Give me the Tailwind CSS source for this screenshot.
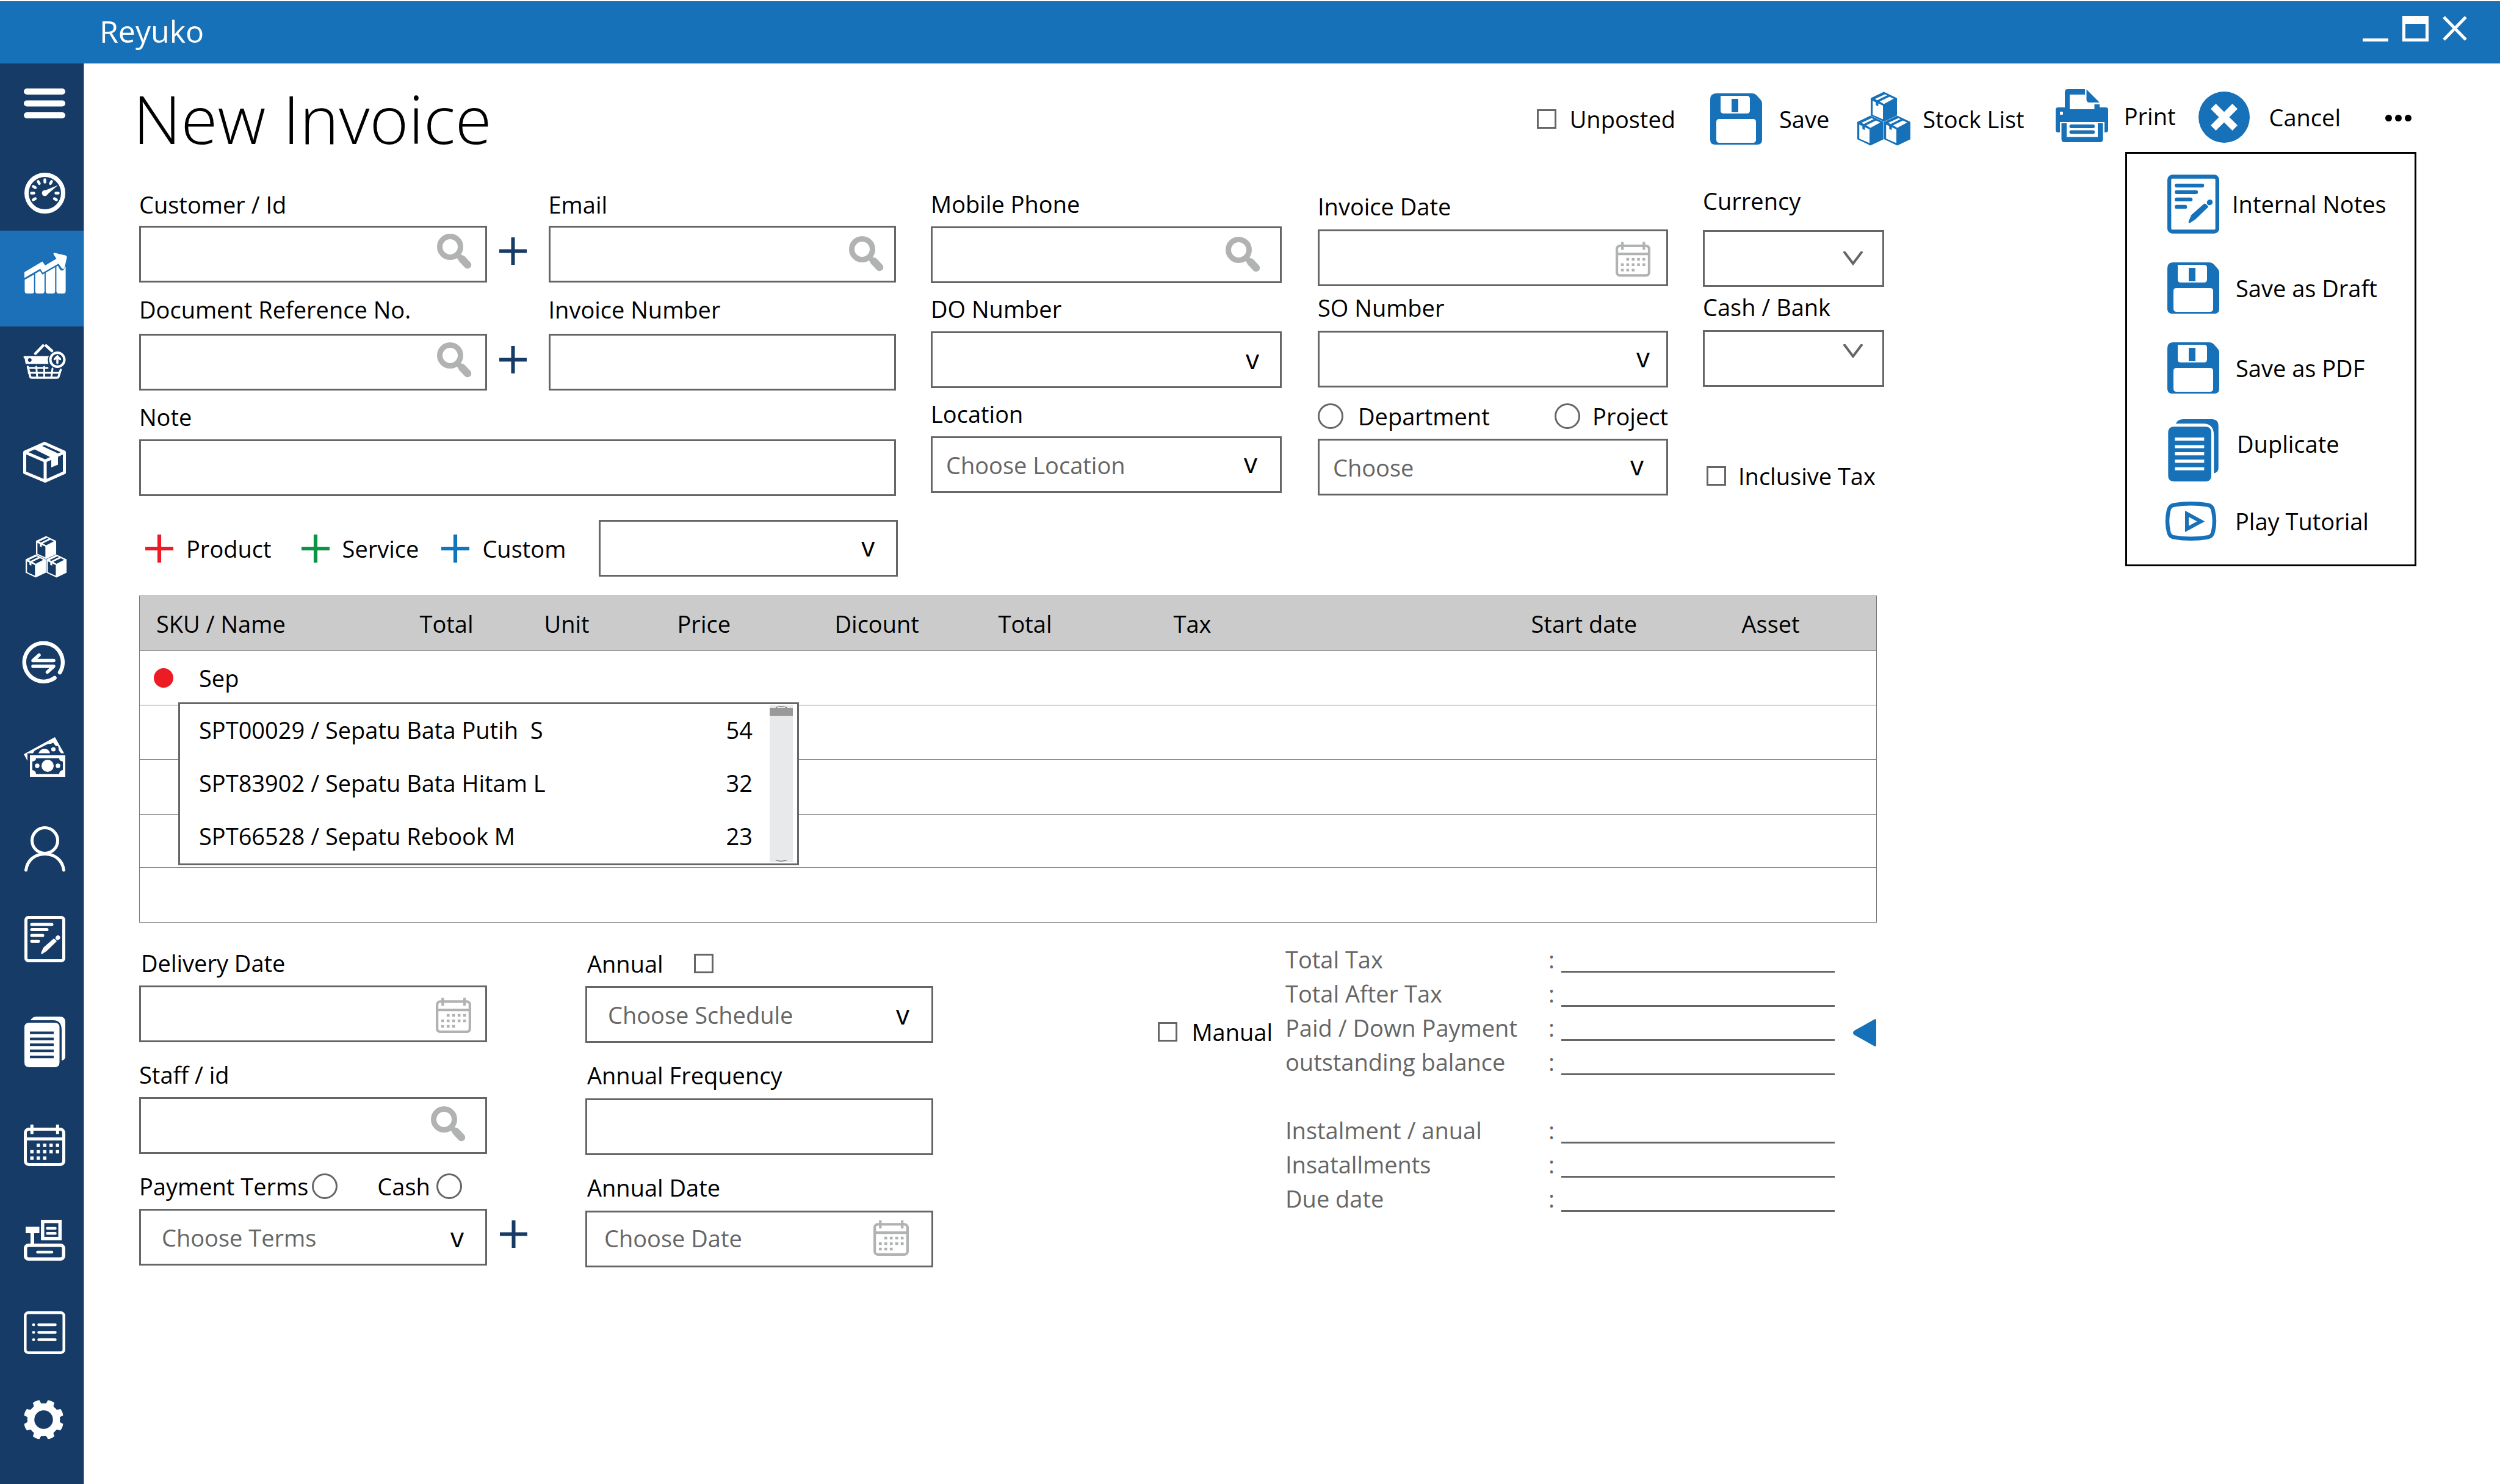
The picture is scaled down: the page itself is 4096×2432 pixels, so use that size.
<!DOCTYPE html>
<html lang="en">
<head>
<meta charset="utf-8">
<title>Reyuko - New Invoice</title>
<script src="https://cdn.jsdelivr.net/npm/@tailwindcss/browser@4"></script>
</head>
<body class="flex min-h-screen flex-col bg-white font-['Open_Sans','Noto_Sans',sans-serif] text-[38px] leading-[52px] text-black">

<!-- icon sprite -->
<svg class="hidden" aria-hidden="true">
  <symbol id="i-menu" viewBox="0 0 68 49"><g stroke="currentColor" stroke-width="10" stroke-linecap="round"><path d="M5 5H63M5 24.500H63M5 44H63"/></g></symbol>
  <symbol id="i-gauge" viewBox="0 0 67 67"><circle cx="33.500" cy="33.500" r="30" fill="none" stroke="currentColor" stroke-width="7"/><g stroke="currentColor" stroke-width="4.500" stroke-linecap="round"><path id="tick" d="M33.500 15.500V11.500"/><use href="#tick" transform="rotate(30 33.500 33.500)"/><use href="#tick" transform="rotate(-30 33.500 33.500)"/><use href="#tick" transform="rotate(-60 33.500 33.500)"/><use href="#tick" transform="rotate(90 33.500 33.500)"/><use href="#tick" transform="rotate(-90 33.500 33.500)"/><use href="#tick" transform="rotate(120 33.500 33.500)"/><use href="#tick" transform="rotate(-120 33.500 33.500)"/></g><circle cx="33.500" cy="33.500" r="4.800" fill="currentColor"/><path fill="currentColor" d="M31.500 30L55 20.500L36.500 36.500Z"/></symbol>
  <symbol id="i-chart" viewBox="0 0 70 67"><g fill="currentColor"><path d="M0 32L29.500 14.500L34 21L52.500 10L48.500 4Q46 0 50 .5L67 4.500Q70 5.500 69.500 8L66 24Q64 30 60 24L56 18L30 33L26 26.500L0 41.500Z"/><path d="M.5 44.500L15.700 36V64Q15.700 67 12.500 67H4Q.5 67 .5 63Z"/><path d="M17.700 34.500L25.500 30L29.500 36L32.900 34V63Q32.900 67 29 67H21.500Q17.700 67 17.700 63Z"/><path d="M34.900 33L50.300 24V63Q50.300 67 47 67H38.500Q34.900 67 34.900 63Z"/><path d="M52.400 23L55 21.500Q58 29 61 29.500Q65 29.500 66.500 23.500L67.600 24V63Q67.600 67 64 67H56Q52.400 67 52.400 63Z"/></g></symbol>
  <symbol id="i-basket" viewBox="0 0 70 57"><g fill="none" stroke="currentColor" stroke-linecap="round"><path stroke-width="4.500" d="M20 15.500L32.500 2.500M37.500 2.500L47 11"/><circle cx="56" cy="25.500" r="11.500" stroke-width="4"/><path stroke-width="3.500" d="M56 31V20.500M51.500 24.500L56 20L60.500 24.500"/><path stroke-width="3.500" stroke-linejoin="round" d="M7.500 37L11.500 53Q12 55 14 55H55Q57.500 55 58 53L61.500 42"/><path stroke-width="3" d="M8 39H40M9 47H59M21.500 37L23 55M34.500 37V55M48 40L46 55"/></g><path fill="currentColor" fill-rule="evenodd" d="M1.500 19.500H42Q39 25 41.500 32.500H4L2.500 24Q-1 21.500 1.500 19.500ZM10.800 23A3 3 0 1 0 10.800 29A3 3 0 1 0 10.800 23Z"/></symbol>
  <symbol id="i-box" viewBox="0 0 70 67"><g fill="none" stroke="currentColor" stroke-width="5" stroke-linejoin="round"><path d="M35 2.500L67.500 17V50.500L36 64.500L2.500 50.500V17Z"/><path d="M2.500 17L36 31.500L67.500 17M36 31V64"/></g><path fill="currentColor" d="M16 11L28 5.500L57 19V37.500L46 42V26Z"/></symbol>
  <symbol id="i-crate" viewBox="0 0 44 50"><path fill="currentColor" fill-rule="evenodd" d="M22 0L44 10.500V39.500L22 50L0 39.500V10.500ZM3.300 15V38.500L20.500 46V23L12.700 19.300V24.200L8.500 22.300V17.300ZM7 12L11 14L27.500 5.700L24 4ZM15 16L22 20.300L38.500 11.500L31.500 8Z"/></symbol>
  <symbol id="i-crates" viewBox="0 0 87 89"><use href="#i-crate" x="22" y="0" width="43" height="50"/><use href="#i-crate" x="0" y="39" width="43" height="50"/><use href="#i-crate" x="44" y="39" width="43" height="50"/></symbol>
  <symbol id="i-exchange" viewBox="0 0 70 71"><g fill="none" stroke="currentColor" stroke-linecap="round" stroke-linejoin="round"><path stroke-width="6.500" d="M53.500 60A31.500 31.500 0 1 1 62 51"/><path stroke-width="5.500" d="M52 31.500H18L28 22.500M18 41H52L41.500 50.500"/></g></symbol>
  <symbol id="i-money" viewBox="0 0 68 65"><g fill="currentColor"><path fill-rule="evenodd" d="M10 29.500H68V65H10ZM20 34.500Q20 39 14 40V54Q20 55 20 60.500H58Q58 55 64 54V40Q58 39 58 34.500Z"/><circle cx="39" cy="47" r="10"/><circle cx="22" cy="47" r="3.700"/><circle cx="56" cy="47" r="3.700"/><path fill-rule="evenodd" d="M0 28L51 0L66 26.500H6V39ZM15 26.500L18 22L40 11Q44 12 48 9L51 13Q52 15 56 14.500L57 18Q56 21 61 26.500Z"/><path d="M24 26.500Q27 19 34 19Q41 19 43 26.500Z"/><circle cx="48.500" cy="20" r="3.600"/></g></symbol>
  <symbol id="i-user" viewBox="0 0 67 75"><g fill="none" stroke="currentColor" stroke-width="5" stroke-linecap="round"><circle cx="33.500" cy="23.500" r="21"/><path d="M2.500 72C4.500 56 17 45.500 33.500 45.500S62.500 56 64.500 72"/></g></symbol>
  <symbol id="i-note" viewBox="0 0 67 76"><g fill="none" stroke="currentColor" stroke-linecap="round"><rect x="2.500" y="2.500" width="62" height="71" rx="4" stroke-width="5"/><path stroke-width="5" d="M12 14H45M12 22.500H37M12 32H30M12 41.500H23"/><path stroke-width="7" d="M54.500 36L55 35.500"/></g><path fill="currentColor" d="M27.500 60L31 52L47.500 37.500Q50 37 53 41.500L36.500 57.500L29 62.500Q27 62.500 27.500 60Z"/></symbol>
  <symbol id="i-docs" viewBox="0 0 67 83"><g fill="currentColor"><path fill-rule="evenodd" d="M8 10H49.500Q57.500 10 57.500 18V75Q57.500 83 49.500 83H8Q0 83 0 75V18Q0 10 8 10ZM9 24.500V28.700H48V24.500ZM9 34.500V38.700H48V34.500ZM9 44V48.200H48V44ZM9 54V58.200H48V54ZM9 64V68.200H48V64Z"/><path d="M10 6Q13 0 20 0H58Q67 0 67 9V65Q67 71 61 72V22Q61 6 47 6Z"/></g></symbol>
  <symbol id="i-calendar" viewBox="0 0 68 68"><g fill="none" stroke="currentColor" stroke-width="5"><rect x="2.500" y="7.500" width="63" height="58" rx="6"/><path d="M2 23.500H66M13.300 0V15.500M55.300 0V15.500"/><path stroke-width="5.300" stroke-dasharray="5.500 5" d="M21 34H60M10.500 44.500H60M10.500 55H38"/></g></symbol>
  <symbol id="i-register" viewBox="0 0 68 67"><g fill="none" stroke="currentColor" stroke-width="5.500" stroke-linecap="round"><rect x="30.800" y="2.700" width="28.500" height="28"/><rect x="2.700" y="41.700" width="62.500" height="22.500" rx="5"/><path stroke-width="4.500" d="M38.500 14H51.500M38.500 22.300H51.500M22.500 53H46"/></g><path fill="currentColor" d="M3 11.500H25.500V22H17V40H11V22H3Z"/></symbol>
  <symbol id="i-list" viewBox="0 0 68 70"><g fill="none" stroke="currentColor" stroke-width="4.500" stroke-linecap="round"><rect x="2.300" y="2.300" width="63.400" height="65.400" rx="5"/><path d="M24.500 22H51.500M24.500 34.500H51.500M24.500 46.500H51.500M15.800 22H16.200M15.800 34.500H16.200M15.800 46.500H16.200"/></g></symbol>
  <symbol id="i-gear" viewBox="0 0 67 67"><circle cx="33.500" cy="33.500" r="21" fill="none" stroke="currentColor" stroke-width="11.500"/><g fill="currentColor"><path id="tooth" d="M23.500 12Q28.500 7 27.500 1.500Q33.500 -.5 39.500 1.500Q38.500 7 43.500 12Z" transform="rotate(22.500 33.500 33.500)"/><use href="#tooth" transform="rotate(45 33.500 33.500)"/><use href="#tooth" transform="rotate(90 33.500 33.500)"/><use href="#tooth" transform="rotate(135 33.500 33.500)"/><use href="#tooth" transform="rotate(180 33.500 33.500)"/><use href="#tooth" transform="rotate(225 33.500 33.500)"/><use href="#tooth" transform="rotate(270 33.500 33.500)"/><use href="#tooth" transform="rotate(315 33.500 33.500)"/></g></symbol>
  <symbol id="i-floppy" viewBox="0 0 85 84"><path fill="currentColor" fill-rule="evenodd" d="M10 0H69Q73 0 76 3L83 11Q85 13.500 85 17V76Q85 84 77 84H8Q0 84 0 76V10Q0 0 10 0ZM17 4V28Q17 33 22 33H60Q65 33 65 28V9Q65 4 60 4ZM35 9H46V31H35ZM15 42Q10 42 10 47V76Q10 81 15 81H70Q75 81 75 76V47Q75 42 70 42Z"/></symbol>
  <symbol id="i-printer" viewBox="0 0 86 87"><g fill="currentColor"><path fill-rule="evenodd" d="M20 0H48V9H23V33H63.500V25H72V30H82Q86 30 86 34V67Q86 71 82 71H80V54H7V71H4Q0 71 0 67V34Q0 30 4 30H15V5Q15 0 20 0ZM7 38Q7 37 8 37H11Q12 37 12 38V41Q12 42 11 42H8Q7 42 7 41Z"/><path d="M50.500 .5L72 22H55.500Q50.500 22 50.500 17Z"/><path d="M9.500 56H18V78.500H69V56H77.500V82Q77.500 87 73 87H14Q9.500 87 9.500 82Z"/><path d="M25.500 58H61.500Q64 58 64 61T61.500 64H25.500Q22.500 64 22.500 61T25.500 58ZM25.500 67.500H61.500Q64 67.500 64 70.500T61.500 73.500H25.500Q22.500 73.500 22.500 70.500T25.500 67.500Z"/></g></symbol>
  <symbol id="i-cancel" viewBox="0 0 84 84"><circle cx="42" cy="42" r="42" fill="currentColor"/><path stroke="#fff" stroke-width="12" stroke-linecap="square" d="M28.500 28.500L55.500 55.500M55.500 28.500L28.500 55.500"/></symbol>
  <symbol id="i-play" viewBox="0 0 85 64"><g fill="none" stroke="currentColor"><path stroke-width="6.500" d="M15 5.500Q42.500 1 70 5.500Q77.500 6.500 79 15Q83 32 79 49Q77.500 57.500 70 58.500Q42.500 63 15 58.500Q7.500 57.500 6 49Q2 32 6 15Q7.500 6.500 15 5.500Z"/><path stroke-width="6" d="M36 20L59 32.500L36 45Z"/></g></symbol>
  <symbol id="i-search" viewBox="0 0 57 58"><g fill="none" stroke="currentColor"><circle cx="21.500" cy="21.500" r="17" stroke-width="9"/><path stroke-width="9" d="M32 33L40 41"/><path stroke-width="12.500" stroke-linecap="round" d="M41 41.500L50 51"/></g></symbol>
  <symbol id="i-plus" viewBox="0 0 45 45"><path stroke="currentColor" stroke-width="6" d="M0 22.500H45M22.500 0V45"/></symbol>
  <symbol id="i-caret" viewBox="0 0 34 23"><path fill="none" stroke="currentColor" stroke-width="4" d="M2 0L17 20L32 0"/></symbol>
</svg>

<!-- window title bar -->
<header class="flex h-[104px] items-center justify-between border-t-2 border-white bg-[#1771b8] pl-[163px] pr-[54px] text-white">
  <span class="pb-1 text-[50px] leading-[68px]">Reyuko</span>
  <div class="flex h-[54px] items-start gap-[23px]">
    <button aria-label="Minimize" class="flex h-[42px] w-[42px] items-end"><span class="h-[5px] w-full bg-white"></span></button>
    <button aria-label="Maximize" class="h-[42px] w-[43px] border-[5px] border-t-[13px] border-white"></button>
    <button aria-label="Close" class="h-[42px] w-[40px]"><svg viewBox="0 0 40 42" class="h-full w-full"><path stroke="currentColor" stroke-width="5" d="M2 2L38 39M38 2L2 39"/></svg></button>
  </div>
</header>

<div class="flex flex-1">
  <!-- module navigation -->
  <nav aria-label="Modules" class="grid w-[138px] shrink-0 grid-rows-[138px_95px_186px_160px_154px_173px_157px_146px_147px_165px_177px_156px_150px_144px_auto] content-start items-start justify-items-center border-r border-[#a9bccf] bg-[#153b66] pt-[41px] text-white">
    <button aria-label="Menu" class="ml-[9px]"><svg class="h-[49px] w-[68px]"><use href="#i-menu"/></svg></button>
    <a href="#dashboard" aria-label="Dashboard" class="ml-[9px]"><svg class="h-[67px] w-[67px]"><use href="#i-gauge"/></svg></a>
    <a href="#sales" aria-label="Sales" aria-current="page" class="flex h-[157px] w-full justify-center bg-[#1c70b8] pl-[12px] pt-[36px]"><svg class="h-[67px] w-[70px]"><use href="#i-chart"/></svg></a>
    <a href="#purchase" aria-label="Purchase" class="ml-[9px]"><svg class="h-[57px] w-[70px]"><use href="#i-basket"/></svg></a>
    <a href="#products" aria-label="Products" class="ml-[9px]"><svg class="h-[67px] w-[70px]"><use href="#i-box"/></svg></a>
    <a href="#inventory" aria-label="Inventory" class="ml-[14px]"><svg class="h-[69px] w-[69px]"><use href="#i-crates"/></svg></a>
    <a href="#transfer" aria-label="Transfer" class="ml-[4px]"><svg class="h-[71px] w-[70px]"><use href="#i-exchange"/></svg></a>
    <a href="#cash" aria-label="Cash" class="ml-[9px]"><svg class="h-[65px] w-[68px]"><use href="#i-money"/></svg></a>
    <a href="#contacts" aria-label="Contacts" class="ml-[9px]"><svg class="h-[75px] w-[67px]"><use href="#i-user"/></svg></a>
    <a href="#notes" aria-label="Notes" class="ml-[9px]"><svg class="h-[76px] w-[67px]"><use href="#i-note"/></svg></a>
    <a href="#documents" aria-label="Documents" class="ml-[9px]"><svg class="h-[83px] w-[67px]"><use href="#i-docs"/></svg></a>
    <a href="#calendar" aria-label="Calendar" class="ml-[9px]"><svg class="h-[68px] w-[68px]"><use href="#i-calendar"/></svg></a>
    <a href="#pos" aria-label="Point of sale" class="ml-[9px]"><svg class="h-[67px] w-[68px]"><use href="#i-register"/></svg></a>
    <a href="#reports" aria-label="Reports" class="ml-[9px]"><svg class="h-[70px] w-[68px]"><use href="#i-list"/></svg></a>
    <a href="#settings" aria-label="Settings" class="ml-[6px]"><svg class="h-[67px] w-[67px]"><use href="#i-gear"/></svg></a>
  </nav>

  <main class="min-w-0 flex-1 pl-[90px] pt-4">
    <!-- page heading and toolbar -->
    <div class="flex h-[147px] items-center justify-between pr-[145px]">
      <h1 class="-ml-[10px] text-[109px] font-light leading-[147px]">New Invoice</h1>
      <div class="flex items-center">
        <label class="flex items-center gap-[22px] pt-0.5"><input type="checkbox" class="h-8 w-8 appearance-none border-[3px] border-[#666]">Unposted</label>
        <button class="ml-[57px] flex items-center gap-[28px] pt-0.5"><svg class="h-[84px] w-[85px] text-[#1771b8]"><use href="#i-floppy"/></svg>Save</button>
        <button class="ml-[46px] flex items-center gap-[20px] pt-0.5"><svg class="h-[89px] w-[87px] text-[#1771b8]"><use href="#i-crates"/></svg>Stock List</button>
        <button class="ml-[51px] flex items-center gap-[26px] pb-2"><svg class="h-[87px] w-[86px] text-[#1771b8]"><use href="#i-printer"/></svg>Print</button>
        <button class="ml-[37px] flex items-center gap-[32px] pb-1"><svg class="h-[84px] w-[84px] text-[#1771b8]"><use href="#i-cancel"/></svg>Cancel</button>
        <div class="relative ml-[73px]">
          <button aria-label="More" aria-expanded="true" class="flex h-[52px] items-center gap-[5px]"><span class="h-[11px] w-[11px] rounded-full bg-black"></span><span class="h-[11px] w-[11px] rounded-full bg-black"></span><span class="h-[11px] w-[11px] rounded-full bg-black"></span></button>
          <ul class="absolute -right-[8px] top-[81px] z-20 h-[679px] w-[477px] border-[3px] border-black bg-white pl-[66px] pt-[34px]">
            <li><button class="flex h-[97px] items-center gap-[21px]"><svg class="h-[97px] w-[85px] text-[#1771b8]"><use href="#i-note"/></svg>Internal Notes</button></li>
            <li class="mt-[47px]"><button class="flex h-[84px] items-center gap-[27px]"><svg class="h-[84px] w-[85px] text-[#1771b8]"><use href="#i-floppy"/></svg>Save as Draft</button></li>
            <li class="mt-[47px]"><button class="flex h-[84px] items-center gap-[27px]"><svg class="h-[84px] w-[85px] text-[#1771b8]"><use href="#i-floppy"/></svg>Save as PDF</button></li>
            <li class="mt-[42px]"><button class="flex h-[102px] items-start gap-[29px]"><svg class="h-[102px] w-[85px] text-[#1771b8]"><use href="#i-docs"/></svg><span class="pt-[14px]">Duplicate</span></button></li>
            <li class="mt-[33px]"><button class="-ml-[4px] flex h-[64px] items-center gap-[30px]"><svg class="h-[64px] w-[85px] text-[#1771b8]"><use href="#i-play"/></svg>Play Tutorial</button></li>
          </ul>
        </div>
      </div>
    </div>

    <form class="pr-[1009px] pt-[36px]">
      <!-- invoice header fields -->
      <div class="grid grid-cols-[minmax(0,1240fr)_minmax(0,575fr)_minmax(0,576fr)_minmax(0,297fr)] gap-x-[57px]">
        <div class="flex flex-col pt-[6px]">
          <div class="flex items-end">
            <div class="flex min-w-0 flex-1 flex-col gap-[9px]">
              <label for="customer">Customer / Id</label>
              <div class="relative"><input id="customer" type="text" class="block h-[93px] w-full border-[3px] border-[#666] px-6"><svg class="absolute right-[25px] top-[13px] h-[58px] w-[57px] text-[#b1b3b2]"><use href="#i-search"/></svg></div>
            </div>
            <button type="button" aria-label="Add customer" class="mb-[29px] ml-5 mr-9 text-[#153b66]"><svg class="h-[45px] w-[45px]"><use href="#i-plus"/></svg></button>
            <div class="flex min-w-0 flex-1 flex-col gap-[9px]">
              <label for="email">Email</label>
              <div class="relative"><input id="email" type="text" class="block h-[93px] w-full border-[3px] border-[#666] px-6"><svg class="absolute right-[20px] top-[17px] h-[58px] w-[57px] text-[#b1b3b2]"><use href="#i-search"/></svg></div>
            </div>
          </div>
          <div class="mt-[18px] flex items-end">
            <div class="flex min-w-0 flex-1 flex-col gap-[14px]">
              <label for="docref">Document Reference No.</label>
              <div class="relative"><input id="docref" type="text" class="block h-[93px] w-full border-[3px] border-[#666] px-6"><svg class="absolute right-[25px] top-[14px] h-[58px] w-[57px] text-[#b1b3b2]"><use href="#i-search"/></svg></div>
            </div>
            <button type="button" aria-label="Add document reference" class="mb-[28px] ml-5 mr-9 text-[#153b66]"><svg class="h-[45px] w-[45px]"><use href="#i-plus"/></svg></button>
            <div class="flex min-w-0 flex-1 flex-col gap-[14px]">
              <label for="invno">Invoice Number</label>
              <input id="invno" type="text" class="block h-[93px] w-full border-[3px] border-[#666] px-6">
            </div>
          </div>
          <div class="mt-[17px] flex flex-col gap-[11px]">
            <label for="note">Note</label>
            <input id="note" type="text" class="block h-[93px] w-full border-[3px] border-[#666] px-6">
          </div>
        </div>

        <div class="flex flex-col gap-4 pt-[5px]">
          <div class="flex flex-col gap-[11px]">
            <label for="mobile">Mobile Phone</label>
            <div class="relative"><input id="mobile" type="text" class="block h-[93px] w-full border-[3px] border-[#666] px-6"><svg class="absolute right-[35px] top-[17px] h-[58px] w-[57px] text-[#b1b3b2]"><use href="#i-search"/></svg></div>
          </div>
          <div class="flex flex-col gap-[11px]">
            <label for="donum">DO Number</label>
            <div class="relative"><select id="donum" class="block h-[93px] w-full appearance-none border-[3px] border-[#666] pl-6"><option></option></select><span class="pointer-events-none absolute right-[37px] top-[19px] text-[44px]">v</span></div>
          </div>
          <div class="flex flex-col gap-[11px]">
            <label for="location">Location</label>
            <div class="relative"><select id="location" class="block h-[93px] w-full appearance-none border-[3px] border-[#666] pl-[22px] text-[#666]"><option>Choose Location</option></select><span class="pointer-events-none absolute right-[40px] top-[17px] text-[44px]">v</span></div>
          </div>
        </div>

        <div class="flex flex-col pl-0.5 pt-[9px]">
          <div class="flex flex-col gap-3">
            <label for="invdate">Invoice Date</label>
            <div class="relative"><input id="invdate" type="text" class="block h-[93px] w-full border-[3px] border-[#666] px-6"><svg class="absolute right-[29px] top-[20px] h-[58px] w-[57px] text-[#b1b3b2]"><use href="#i-calendar"/></svg></div>
          </div>
          <div class="mt-[9px] flex flex-col gap-3">
            <label for="sonum">SO Number</label>
            <div class="relative"><select id="sonum" class="block h-[93px] w-full appearance-none border-[3px] border-[#666] pl-6"><option></option></select><span class="pointer-events-none absolute right-[30px] top-[17px] text-[44px]">v</span></div>
          </div>
          <div class="mt-[21px] flex flex-col gap-[11px]">
            <div class="flex justify-between">
              <label class="flex items-center gap-6"><input type="radio" name="scope" class="h-[42px] w-[42px] appearance-none rounded-full border-[3px] border-[#666]">Department</label>
              <label class="flex items-center gap-5"><input type="radio" name="scope" class="h-[42px] w-[42px] appearance-none rounded-full border-[3px] border-[#666]">Project</label>
            </div>
            <div class="relative"><select aria-label="Department or project" class="block h-[93px] w-full appearance-none border-[3px] border-[#666] pl-[22px] text-[#666]"><option>Choose</option></select><span class="pointer-events-none absolute right-[40px] top-[17px] text-[44px]">v</span></div>
          </div>
        </div>

        <div class="flex flex-col">
          <div class="flex flex-col gap-[22px]">
            <label for="currency">Currency</label>
            <div class="relative"><select id="currency" class="block h-[93px] w-full appearance-none border-[3px] border-[#666] pl-6"><option></option></select><svg class="pointer-events-none absolute right-[34px] top-[35px] h-[23px] w-[34px] text-[#666]"><use href="#i-caret"/></svg></div>
          </div>
          <div class="mt-[7px] flex flex-col gap-3">
            <label for="cashbank">Cash / Bank</label>
            <div class="relative"><select id="cashbank" class="block h-[93px] w-full appearance-none border-[3px] border-[#666] pl-6"><option></option></select><svg class="pointer-events-none absolute right-[34px] top-[23px] h-[23px] w-[34px] text-[#666]"><use href="#i-caret"/></svg></div>
          </div>
          <label class="mt-[120px] flex items-center gap-[20px] pl-[6px]"><input type="checkbox" class="h-8 w-8 appearance-none border-[3px] border-[#666]">Inclusive Tax</label>
        </div>
      </div>

      <!-- add line actions -->
      <div class="mt-[39px] flex h-[93px] items-center pl-[10px]">
        <button type="button" class="flex items-center gap-[21px]"><svg class="h-[46px] w-[46px] text-[#ed1c24]"><use href="#i-plus"/></svg>Product</button>
        <button type="button" class="ml-[49px] flex items-center gap-[21px]"><svg class="h-[46px] w-[46px] text-[#0b9444]"><use href="#i-plus"/></svg>Service</button>
        <button type="button" class="ml-[37px] flex items-center gap-[21px]"><svg class="h-[46px] w-[46px] text-[#0f75bc]"><use href="#i-plus"/></svg>Custom</button>
        <div class="relative ml-[54px]"><select aria-label="Custom type" class="block h-[93px] w-[490px] appearance-none border-[3px] border-[#666] pl-6"><option></option></select><span class="pointer-events-none absolute right-[38px] top-[17px] text-[44px]">v</span></div>
      </div>

      <!-- line items -->
      <div class="mt-[31px] pr-[13px]">
        <table class="w-full table-fixed border-collapse border border-[#777] text-left">
          <colgroup><col class="w-[459px]"><col class="w-[204px]"><col class="w-[218px]"><col class="w-[258px]"><col class="w-[268px]"><col class="w-[287px]"><col class="w-[586px]"><col class="w-[345px]"><col class="w-[221px]"></colgroup>
          <thead>
            <tr class="h-[90px] border-b border-[#777] bg-[#cbcbcb]">
              <th class="pl-[27px] font-normal">SKU / Name</th><th class="font-normal">Total</th><th class="font-normal">Unit</th><th class="font-normal">Price</th><th class="font-normal">Dicount</th><th class="font-normal">Total</th><th class="font-normal">Tax</th><th class="font-normal">Start date</th><th class="font-normal">Asset</th>
            </tr>
          </thead>
          <tbody>
            <tr class="h-[89px] border-b border-[#777]">
              <td colspan="9" class="relative">
                <div class="flex items-center pl-[23px]">
                  <span class="h-8 w-8 rounded-full bg-[#ed1c24]"></span>
                  <input aria-label="SKU or name" type="text" value="Sep" class="ml-[42px] w-[400px]">
                </div>
                <div class="absolute left-[63px] top-[84px] z-10 flex h-[267px] w-[1017px] justify-between border-[3px] border-[#666] bg-white">
                  <ul class="flex-1 pl-[31px] pr-[28px]">
                    <li class="flex h-[87px] items-center justify-between whitespace-pre pb-1"><span>SPT00029 / Sepatu Bata Putih  S</span><span>54</span></li>
                    <li class="flex h-[87px] items-center justify-between whitespace-pre pb-1"><span>SPT83902 / Sepatu Bata Hitam L</span><span>32</span></li>
                    <li class="flex h-[87px] items-center justify-between whitespace-pre pb-1"><span>SPT66528 / Sepatu Rebook M</span><span>23</span></li>
                  </ul>
                  <div class="mr-[7px] mt-[2px] flex h-[257px] w-[38px] flex-col items-center bg-[#e8e9ea]">
                    <svg viewBox="0 0 18 4" class="h-[4px] w-[18px]"><path fill="none" stroke="#555" d="M0 3.500Q9 0 18 3.500"/></svg>
                    <span class="h-[13px] w-full bg-[#999]"></span>
                    <svg viewBox="0 0 18 4" class="mt-auto h-[4px] w-[18px]"><path fill="none" stroke="#555" d="M0 .5Q9 4 18 .5"/></svg>
                  </div>
                </div>
              </td>
            </tr>
            <tr class="h-[89px] border-b border-[#777]"><td colspan="9"></td></tr>
            <tr class="h-[90px] border-b border-[#777]"><td colspan="9"></td></tr>
            <tr class="h-[87px] border-b border-[#777]"><td colspan="9"></td></tr>
            <tr class="h-[90px]"><td colspan="9"></td></tr>
          </tbody>
        </table>
      </div>

      <!-- delivery, schedule and totals -->
      <div class="mt-[32px] flex justify-between pr-[13px]">
        <div class="flex">
          <div class="flex flex-col gap-[27px] pt-2">
            <div class="flex w-[570px] flex-col gap-[11px]">
              <label for="delivery" class="pl-[3px]">Delivery Date</label>
              <div class="relative"><input id="delivery" type="text" class="block h-[93px] w-full border-[3px] border-[#666] px-6"><svg class="absolute right-[26px] top-[20px] h-[58px] w-[58px] text-[#b1b3b2]"><use href="#i-calendar"/></svg></div>
            </div>
            <div class="flex w-[570px] flex-col gap-[11px]">
              <label for="staff">Staff / id</label>
              <div class="relative"><input id="staff" type="text" class="block h-[93px] w-full border-[3px] border-[#666] px-6"><svg class="absolute right-[35px] top-[15px] h-[58px] w-[57px] text-[#b1b3b2]"><use href="#i-search"/></svg></div>
            </div>
            <div class="flex items-end">
              <div class="flex w-[570px] flex-col gap-[11px]">
                <div class="flex">
                  <label class="flex items-center gap-[6px]">Payment Terms<input type="radio" name="pay" class="h-[42px] w-[42px] appearance-none rounded-full border-[3px] border-[#666]"></label>
                  <label class="ml-[65px] flex items-center gap-[10px]">Cash<input type="radio" name="pay" class="h-[42px] w-[42px] appearance-none rounded-full border-[3px] border-[#666]"></label>
                </div>
                <div class="relative"><select aria-label="Payment terms" class="block h-[93px] w-full appearance-none border-[3px] border-[#666] pl-[34px] text-[#666]"><option>Choose Terms</option></select><span class="pointer-events-none absolute right-[38px] top-[20px] text-[44px]">v</span></div>
              </div>
              <button type="button" aria-label="Add payment terms" class="mb-[29px] ml-[21px] text-[#153b66]"><svg class="h-[45px] w-[45px]"><use href="#i-plus"/></svg></button>
            </div>
          </div>

          <div class="ml-[95px] flex w-[570px] flex-col gap-[27px] pt-[9px]">
            <div class="flex flex-col gap-[11px]">
              <label class="flex items-center gap-[50px] pl-[3px]">Annual<input type="checkbox" class="h-8 w-8 appearance-none border-[3px] border-[#666]"></label>
              <div class="relative"><select aria-label="Annual schedule" class="block h-[93px] w-full appearance-none border-[3px] border-[#666] pl-[34px] text-[#666]"><option>Choose Schedule</option></select><span class="pointer-events-none absolute right-[39px] top-[20px] text-[44px]">v</span></div>
            </div>
            <div class="flex flex-col gap-3">
              <label for="freq" class="pl-[3px]">Annual Frequency</label>
              <input id="freq" type="text" class="block h-[93px] w-full border-[3px] border-[#666] px-6">
            </div>
            <div class="flex flex-col gap-3">
              <label for="anndate" class="pl-[3px]">Annual Date</label>
              <div class="relative"><input id="anndate" type="text" placeholder="Choose Date" class="block h-[93px] w-full border-[3px] border-[#666] pl-[28px] pb-1 placeholder:text-[#666]"><svg class="absolute right-[40px] top-[16px] h-[58px] w-[58px] text-[#b1b3b2]"><use href="#i-calendar"/></svg></div>
            </div>
          </div>
        </div>

        <div class="flex text-[#666]">
          <label class="mt-[119px] flex h-[56px] items-center gap-[23px] text-black"><input type="checkbox" class="h-8 w-8 appearance-none border-[3px] border-[#666]">Manual</label>
          <div class="ml-[21px] grid auto-rows-[56px] grid-cols-[431px_21px_448px] leading-[56px]">
            <label for="t1">Total Tax</label><span>:</span><input id="t1" type="text" class="h-[50px] border-b-[3px] border-[#666]">
            <label for="t2">Total After Tax</label><span>:</span><input id="t2" type="text" class="h-[50px] border-b-[3px] border-[#666]">
            <label for="t3">Paid / Down Payment</label><span>:</span><input id="t3" type="text" class="h-[50px] border-b-[3px] border-[#666]">
            <label for="t4">outstanding balance</label><span>:</span><input id="t4" type="text" class="h-[50px] border-b-[3px] border-[#666]">
            <div class="col-span-3"></div>
            <label for="t5">Instalment / anual</label><span>:</span><input id="t5" type="text" class="h-[50px] border-b-[3px] border-[#666]">
            <label for="t6">Insatallments</label><span>:</span><input id="t6" type="text" class="h-[50px] border-b-[3px] border-[#666]">
            <label for="t7">Due date</label><span>:</span><input id="t7" type="text" class="h-[50px] border-b-[3px] border-[#666]">
          </div>
          <button type="button" aria-label="Expand payment" class="ml-[30px] mt-[126px] h-[45px] w-[38px] text-[#1771b8]"><svg viewBox="0 0 38 45" class="h-full w-full"><path fill="currentColor" d="M35 .5Q38 -1 38 3V42Q38 46 35 44.500L2 26Q-2 22.500 2 19Z"/></svg></button>
        </div>
      </div>
    </form>
  </main>
</div>
</body>
</html>
